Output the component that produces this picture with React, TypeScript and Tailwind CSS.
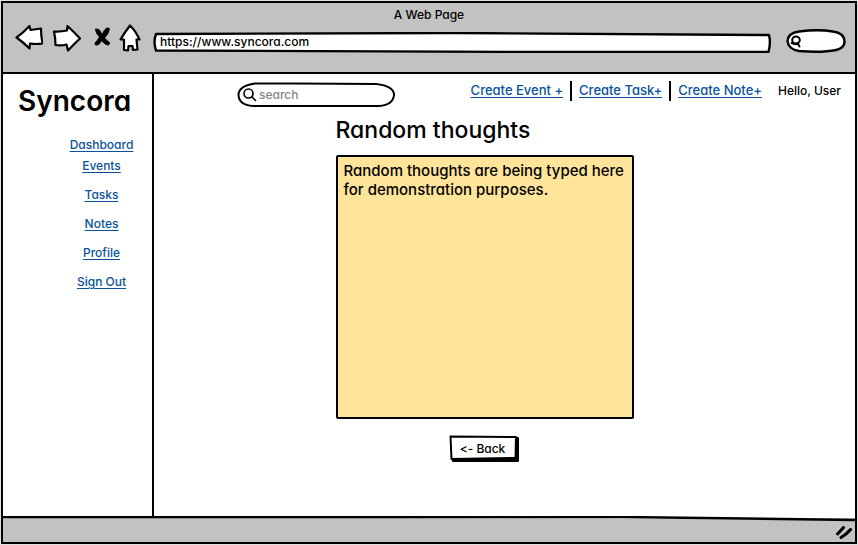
import type { ReactNode } from "react";

const sidebarLinks = ["Dashboard", "Events", "Tasks", "Notes", "Profile", "Sign Out"];
const createLinks = ["Create Event +", "Create Task+", "Create Note+"];

function Outline({ viewBox, d, fill = "white", width = 2.4 }: { viewBox: string; d: string; fill?: string; width?: number }) {
  return (
    <svg className="absolute inset-0 h-full w-full" viewBox={viewBox} preserveAspectRatio="none" aria-hidden="true">
      <path d={d} fill={fill} stroke="black" strokeWidth={width} strokeLinejoin="round" vectorEffect="non-scaling-stroke" />
    </svg>
  );
}

function IconButton({ label, className, children }: { label: string; className: string; children: ReactNode }) {
  return (
    <button type="button" aria-label={label} className={`shrink-0 ${className}`}>
      {children}
    </button>
  );
}

function BrowserBar() {
  return (
    <header className="h-[69px] bg-[#c2c2c2] px-3">
      <p className="pt-[3px] text-center text-[12px] leading-[18px]">A Web Page</p>
      <div className="flex h-7 items-center">
        <IconButton label="Back" className="w-7">
          <svg width="28" height="26" viewBox="0 0 28 26" fill="white" stroke="black" strokeWidth="2.2" strokeLinejoin="round">
            <path d="M1.5 12.500 Q8 8 14.500 1 L15.500 5 L26 3.500 Q26 11 27.500 18.500 Q21 19.500 15 18.500 L14.500 23.500 Q8 17 1.500 12.500 Z" />
          </svg>
        </IconButton>
        <IconButton label="Forward" className="ml-[10px] w-7">
          <svg width="28" height="27" viewBox="0 0 28 27" fill="white" stroke="black" strokeWidth="2.2" strokeLinejoin="round">
            <path d="M1 6.500 Q7 7 14 5.500 L14.500 1 Q21 7 27 13.500 Q21 19 15 25.500 L13.500 19.500 Q8 21 2.500 20 Q2.500 13 1 6.500 Z" />
          </svg>
        </IconButton>
        <IconButton label="Stop" className="ml-[13px] w-4">
          <svg width="16" height="22" viewBox="0 0 16 22" fill="black" stroke="black" strokeWidth="1" strokeLinejoin="round">
            <path d="M1.500 2 L5 2.500 Q7 5 8 8 Q10 3 12.500 1 Q15 0.500 15.500 2 Q14.500 7 10.500 11 Q13 14 15.500 15.500 Q15.500 18.500 13.500 18 Q10 17 7.500 13.500 Q5.500 18 3 18 Q0.500 18.500 1 16 Q4 13 5.500 10 Q1.500 6 1.500 2 Z" />
          </svg>
        </IconButton>
        <IconButton label="Home" className="ml-[9px] w-[22px]">
          <svg width="22" height="28" viewBox="0 0 22 28" fill="white" stroke="black" strokeWidth="2.2" strokeLinejoin="round">
            <path d="M11 1.500 Q16 6 20.500 15.500 L17.500 15.500 L18.500 25.500 L14 26 L13.500 22 L9.500 22 L9 26.500 L5 26 L5 15.500 L1.500 15.500 Q6 8 11 1.500 Z" />
          </svg>
        </IconButton>
        <div className="relative mt-2 ml-[12px] h-[21px] flex-1">
          <Outline viewBox="0 0 618 21" d="M3 2 Q160 1 300 1 Q480 2 615 3 Q617 11 614.500 20 L400 20 Q200 19 3 18.500 Q0 10 3 2 Z" />
          <input
            aria-label="Address"
            defaultValue="https://www.syncora.com"
            className="absolute inset-0 w-full bg-transparent px-[7px] text-[12px] outline-none"
          />
        </div>
        <div className="relative mt-[6px] mr-[-4px] ml-[14px] h-6 w-[61px] shrink-0">
          <Outline viewBox="0 0 61 24" d="M1.500 12 Q2 4 13 2.500 Q32 0 47 2.500 Q58 4 58.500 12 Q59 19 50 21 Q36 24 13 22 Q2 20 1.500 12 Z" />
          <svg className="absolute top-1.5 left-[4px]" width="12" height="14" viewBox="0 0 12 14" fill="none" stroke="black" strokeWidth="2" strokeLinecap="round" aria-hidden="true">
            <ellipse cx="6" cy="5" rx="3.800" ry="3.500" />
            <path d="M7.500 8 L9.500 11.500 M1.500 8 Q5 10 8 8.500" />
          </svg>
          <input aria-label="Web search" className="absolute inset-0 w-full bg-transparent pr-3 pl-5 text-[12px] outline-none" />
        </div>
      </div>
    </header>
  );
}

function Sidebar() {
  return (
    <aside className="w-[151px] shrink-0 border-r-2 border-black">
      <h1 className="pt-[7px] pl-[15px] text-[28px] leading-10 font-semibold">Syncora</h1>
      <nav className="flex flex-col items-center pt-[14px] pl-12">
        {sidebarLinks.map((name, i) => (
          <a
            key={name}
            href="#"
            className={`text-[12px] leading-5 text-[#07529a] underline underline-offset-2 ${i === 0 ? "" : i === 1 ? "mt-px" : "mt-[9px]"}`}
          >
            {name}
          </a>
        ))}
      </nav>
    </aside>
  );
}

function TopBar() {
  return (
    <div className="flex justify-between pt-[7px] pr-[14px] pl-[83px]">
      <div className="relative mt-px h-[26px] w-[159px] shrink-0">
        <Outline viewBox="0 0 160 26" width={2} d="M1.500 13 Q1.500 4 18 1.500 L60 1.500 L140 2 Q158 4 158 13 Q157 23 143 24 L16 24 Q2 23 1.500 13 Z" />
        <svg className="absolute top-[6px] left-[6px]" width="14" height="14" viewBox="0 0 14 14" fill="none" stroke="black" strokeWidth="1.600" aria-hidden="true">
          <circle cx="5.500" cy="5.500" r="4.500" />
          <path d="M9 9 L12.500 12.500" strokeLinecap="round" />
        </svg>
        <input
          aria-label="Search"
          placeholder="search"
          className="absolute inset-0 w-full bg-transparent pr-4 pb-px pl-[22px] text-[12px] outline-none placeholder:text-[#85838f]"
        />
      </div>
      <div className="flex h-5 shrink-0 items-center text-[13px]">
        {createLinks.map((name, i) => (
          <div key={name} className={`h-5 leading-[18px] ${i < 2 ? "mr-[7px] border-r-2 border-black pr-[7px]" : "mr-4"}`}>
            <a href="#" className="text-[#07529a] underline underline-offset-2">
              {name}
            </a>
          </div>
        ))}
        <span className="text-[12px] leading-[18px]">Hello, User</span>
      </div>
    </div>
  );
}

export default function App() {
  return (
    <div className="flex min-h-screen bg-[#dfe2df] p-px font-['Inter','Liberation_Sans',sans-serif] font-medium text-black [font-feature-settings:'cv11','calt'_0]">
      <div className="flex flex-1 flex-col border-2 border-black bg-white">
        <BrowserBar />
        <div className="flex flex-1 border-t-2 border-black">
          <Sidebar />
          <main className="min-w-0 flex-1">
            <TopBar />
            <section className="pr-10">
              <div className="mx-auto flex w-[298px] flex-col items-center">
                <h2 className="mt-2 self-stretch text-[23px] leading-7">
                  <label htmlFor="note">Random thoughts</label>
                </h2>
                <textarea
                  id="note"
                  defaultValue="Random thoughts are being typed here for demonstration purposes."
                  className="mt-[11px] block h-[264px] w-full resize-none overflow-hidden rounded-[2px] border-2 border-black bg-[#ffe499] py-1 pr-0 pl-1.5 text-[15px] leading-[19px] outline-none"
                />
                <button type="button" className="relative mt-4 h-[28px] w-[71px] text-[12px]">
                  <Outline viewBox="0 0 71 28" fill="black" width={2} d="M4 4 L69 3 L69 26 L4 26 Z" />
                  <Outline viewBox="0 0 71 28" width={2} d="M1.500 1.500 L67 2 L66.500 23 L2.500 24 Z" />
                  <span className="relative pr-1">&lt;- Back</span>
                </button>
              </div>
            </section>
          </main>
        </div>
        <footer className="relative h-[24px] bg-[#c2c2c2]">
          <svg className="absolute inset-x-0 top-[-2px] h-1.5 w-full" viewBox="0 0 852 6" preserveAspectRatio="none" aria-hidden="true">
            <path d="M0 0 L620 0 L852 4 Z" fill="white" />
            <path d="M0 1 Q200 1 620 1 L852 4" fill="none" stroke="black" strokeWidth="2.500" />
          </svg>
          <svg className="absolute right-0.5 bottom-0.5" width="18" height="14" viewBox="0 0 18 14" fill="none" stroke="black" strokeWidth="3" strokeLinecap="round" aria-hidden="true">
            <path d="M2.500 8 L8.500 1.500 M6 11.500 Q11 9 15.500 3.500" />
          </svg>
        </footer>
      </div>
    </div>
  );
}
